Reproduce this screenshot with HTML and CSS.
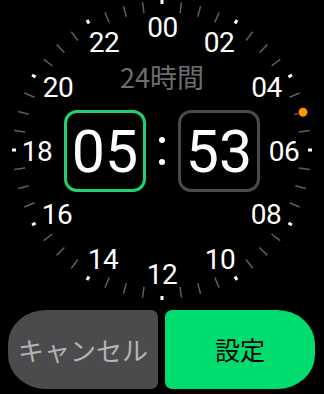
FILE: index.html
```html
<!DOCTYPE html>
<html lang="ja">
<head>
<meta charset="utf-8">
<link rel="stylesheet" href="styles.css">
</head>
<body>
<div class="screen">
  <div class="dial">
    <svg class="ticks" width="324" height="310" viewBox="0 0 324 310">
      <defs>
        <line id="m" x1="0" y1="-149" x2="0" y2="-138" stroke="#5e5e5e" stroke-width="1.5"/>
        <rect id="M" x="-1.5" y="-150" width="3" height="4" fill="#fff"/>
      </defs>
      <g transform="translate(162 150)">
        <use href="#M"/><use href="#M" transform="rotate(30)"/><use href="#M" transform="rotate(60)"/><use href="#M" transform="rotate(90)"/>
        <use href="#M" transform="rotate(120)"/><use href="#M" transform="rotate(150)"/><use href="#M" transform="rotate(180)"/><use href="#M" transform="rotate(210)"/>
        <use href="#M" transform="rotate(240)"/><use href="#M" transform="rotate(270)"/><use href="#M" transform="rotate(300)"/><use href="#M" transform="rotate(330)"/>
        <use href="#m" transform="rotate(7.5)"/><use href="#m" transform="rotate(15)"/><use href="#m" transform="rotate(22.5)"/>
        <use href="#m" transform="rotate(37.5)"/><use href="#m" transform="rotate(45)"/><use href="#m" transform="rotate(52.5)"/>
        <use href="#m" transform="rotate(67.5)"/><use href="#m" transform="rotate(82.5)"/>
        <use href="#m" transform="rotate(97.5)"/><use href="#m" transform="rotate(105)"/><use href="#m" transform="rotate(112.5)"/>
        <use href="#m" transform="rotate(127.5)"/><use href="#m" transform="rotate(135)"/><use href="#m" transform="rotate(142.5)"/>
        <use href="#m" transform="rotate(157.5)"/><use href="#m" transform="rotate(165)"/><use href="#m" transform="rotate(172.5)"/>
        <use href="#m" transform="rotate(187.5)"/><use href="#m" transform="rotate(195)"/><use href="#m" transform="rotate(202.5)"/>
        <use href="#m" transform="rotate(217.5)"/><use href="#m" transform="rotate(225)"/><use href="#m" transform="rotate(232.5)"/>
        <use href="#m" transform="rotate(247.5)"/><use href="#m" transform="rotate(255)"/><use href="#m" transform="rotate(262.5)"/>
        <use href="#m" transform="rotate(277.5)"/><use href="#m" transform="rotate(285)"/><use href="#m" transform="rotate(292.5)"/>
        <use href="#m" transform="rotate(307.5)"/><use href="#m" transform="rotate(315)"/><use href="#m" transform="rotate(322.5)"/>
        <use href="#m" transform="rotate(337.5)"/><use href="#m" transform="rotate(345)"/><use href="#m" transform="rotate(352.5)"/>
        <g transform="rotate(75)">
          <line x1="0" y1="-141" x2="0" y2="-137" stroke="#5e5e5e" stroke-width="1.5"/>
          <circle cx="0" cy="-146" r="4.5" fill="#ff9500"/>
        </g>
      </g>
    </svg>
    <span class="hour h00">00</span>
    <span class="hour h02">02</span>
    <span class="hour h04">04</span>
    <span class="hour h06">06</span>
    <span class="hour h08">08</span>
    <span class="hour h10">10</span>
    <span class="hour h12">12</span>
    <span class="hour h14">14</span>
    <span class="hour h16">16</span>
    <span class="hour h18">18</span>
    <span class="hour h20">20</span>
    <span class="hour h22">22</span>
    <div class="center">
      <div class="mode">24時間</div>
      <div class="time">
        <div class="field active">05</div>
        <div class="colon"><span class="dot"></span><span class="dot"></span></div>
        <div class="field">53</div>
      </div>
    </div>
  </div>
  <div class="actions">
    <button class="btn cancel">キャンセル</button>
    <button class="btn ok">設定</button>
  </div>
</div>
</body>
</html>
```
FILE: styles.css
```css
html, body {
  margin: 0;
  padding: 0;
  background: #000;
}
.screen {
  width: 324px;
  height: 394px;
  overflow: hidden;
  background: #000;
  display: flex;
  flex-direction: column;
}
.dial {
  position: relative;
  height: 310px;
  flex: none;
}
.ticks {
  position: absolute;
  left: 0;
  top: 0;
}
.hour {
  position: absolute;
  transform: translate(-50%, -50%);
  font-family: Roboto, "Liberation Sans", sans-serif;
  font-size: 28px;
  line-height: 1;
  color: #fff;
  letter-spacing: -0.5px;
}
.h00 { left: 162.5px; top: 27.5px; }
.h02 { left: 219px; top: 43px; }
.h04 { left: 266.5px; top: 88px; }
.h06 { left: 284px; top: 152px; }
.h08 { left: 266px; top: 215px; }
.h10 { left: 220px; top: 260px; }
.h12 { left: 162px; top: 275px; }
.h14 { left: 103px; top: 260px; }
.h16 { left: 57px; top: 215px; }
.h18 { left: 37px; top: 152px; }
.h20 { left: 58px; top: 88px; }
.h22 { left: 104px; top: 43px; }
.center {
  position: relative;
  display: flex;
  flex-direction: column;
  align-items: center;
  padding-top: 63px;
}
.mode {
  font-family: "Noto Sans CJK JP", sans-serif;
  font-size: 27px;
  line-height: 27px;
  height: 27px;
  color: #6e6e6e;
  margin-bottom: 20px;
}
.time {
  display: flex;
  align-items: center;
  gap: 13px;
}
.field {
  box-sizing: border-box;
  width: 82px;
  height: 82px;
  border: 3px solid #4a4a4a;
  border-radius: 13px;
  display: flex;
  align-items: center;
  justify-content: center;
  font-family: Roboto, "Liberation Sans", sans-serif;
  font-size: 59px;
  line-height: 1;
  color: #fff;
}
.field.active {
  border-color: #1ed36f;
}
.colon {
  display: flex;
  flex-direction: column;
  gap: 16px;
}
.dot {
  width: 6px;
  height: 6px;
  border-radius: 50%;
  background: #fff;
}
.actions {
  display: flex;
  gap: 7px;
  padding: 0 9px 0 8px;
}
.btn {
  flex: 1;
  height: 79px;
  border: none;
  margin: 0;
  padding: 0;
  font-family: "Noto Sans CJK JP", sans-serif;
  line-height: 1;
  display: flex;
  align-items: center;
  justify-content: center;
}
.cancel {
  background: #4b4b4d;
  color: #b4b4b4;
  font-size: 26px;
  border-radius: 38px 7px 7px 38px / 34px 7px 7px 34px;
}
.ok {
  background: #00dd6e;
  color: #000;
  font-size: 25px;
  border-radius: 7px 38px 38px 7px / 7px 34px 34px 7px;
}
```
